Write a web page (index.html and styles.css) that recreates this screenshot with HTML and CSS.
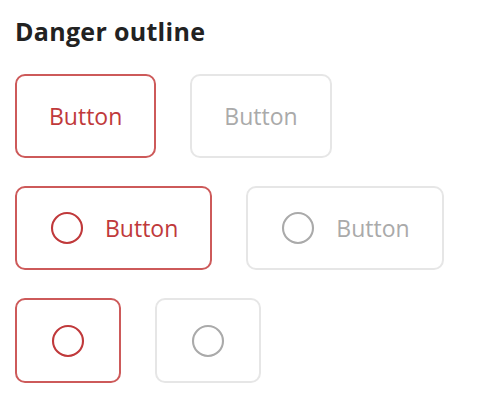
FILE: index.html
```html
<!DOCTYPE html>
<html>
<head>
<meta charset="utf-8">
<link rel="stylesheet" href="styles.css">
</head>
<body>
<div class="page">
  <h2 class="title">Danger outline</h2>
  <div class="row">
    <button class="btn danger"><span class="label">Button</span></button>
    <button class="btn disabled" disabled><span class="label">Button</span></button>
  </div>
  <div class="row">
    <button class="btn danger"><svg class="icon" viewBox="0 0 24 24"><circle cx="12" cy="12" r="10"/></svg><span class="label">Button</span></button>
    <button class="btn disabled" disabled><svg class="icon" viewBox="0 0 24 24"><circle cx="12" cy="12" r="10"/></svg><span class="label">Button</span></button>
  </div>
  <div class="row">
    <button class="btn danger icon-only"><svg class="icon" viewBox="0 0 24 24"><circle cx="12" cy="12" r="10"/></svg></button>
    <button class="btn disabled icon-only" disabled><svg class="icon" viewBox="0 0 24 24"><circle cx="12" cy="12" r="10"/></svg></button>
  </div>
</div>
</body>
</html>
```
FILE: styles.css
```css
html, body {
  margin: 0;
  padding: 0;
  background: #ffffff;
}
.page {
  padding: 15px 15px;
  font-family: "Open Sans", "Liberation Sans", sans-serif;
  display: flex;
  flex-direction: column;
  gap: 28px;
}
.title {
  margin: 0;
  font-size: 25px;
  line-height: 32px;
  font-weight: 700;
  letter-spacing: 0.3px;
  color: #222222;
  margin-bottom: -1px;
}
.row {
  display: flex;
  gap: 34px;
}
.btn {
  box-sizing: border-box;
  height: 84px;
  padding: 0 32px;
  border-radius: 10px;
  border: 2px solid #cd5a5a;
  background: #ffffff;
  display: flex;
  align-items: center;
  gap: 20px;
  font-family: "Open Sans", "Liberation Sans", sans-serif;
  font-size: 23px;
  cursor: pointer;
}
.btn .label {
  line-height: 1;
}
.btn.danger {
  color: #c0393b;
}
.btn.disabled {
  border-color: #e6e6e6;
  color: #aaaaaa;
}
.icon {
  width: 36px;
  height: 36px;
  fill: none;
  stroke: currentColor;
  stroke-width: 1.4;
}
.btn.icon-only {
  padding: 0 33px;
  height: 85px;
}
```
